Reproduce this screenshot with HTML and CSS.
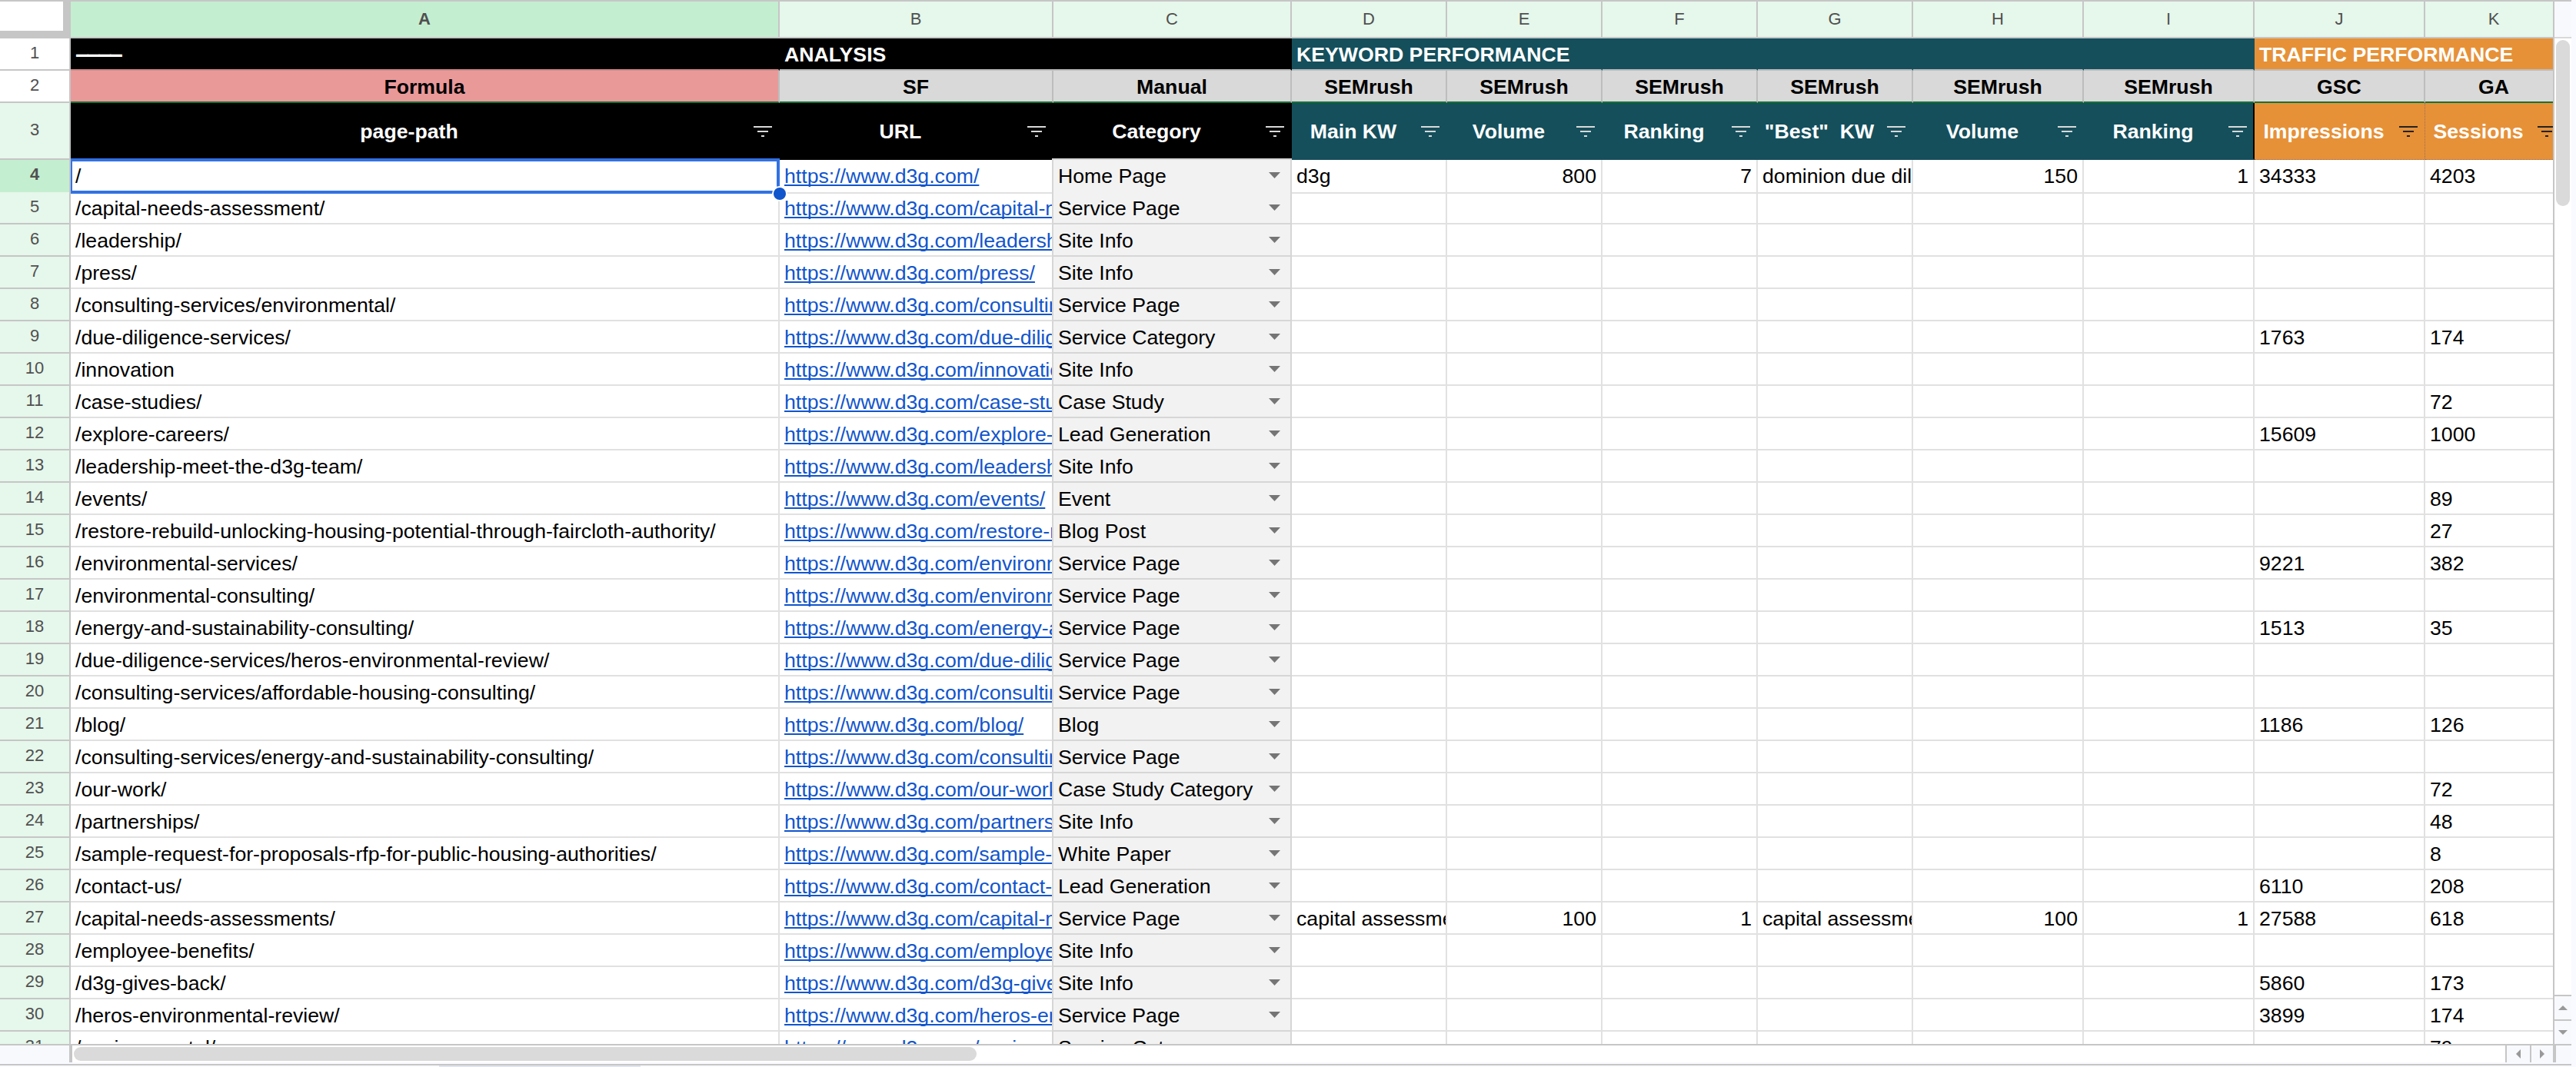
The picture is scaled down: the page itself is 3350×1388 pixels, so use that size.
FILE: index.html
```html
<!DOCTYPE html>
<html lang="en">
<head>
  <meta charset="UTF-8" />
  <meta name="viewport" content="width=device-width, initial-scale=1.0"/>
  <title>Content Audit</title>
  <link rel="stylesheet" href="styles.css">
</head>
<body>
  <div class="sheet">
    <div class="sheet-main">
      <div class="viewport">
        <div class="row letters">
          <div class="corner"></div>
          <div class="selected">A</div>
          <div>B</div>
          <div>C</div>
          <div>D</div>
          <div>E</div>
          <div>F</div>
          <div>G</div>
          <div>H</div>
          <div>I</div>
          <div>J</div>
          <div>K</div>
        </div>

        <div class="row groups">
          <div class="num plain">1</div>
          <div class="cell black dashes">––––</div>
          <div class="cell black wide">ANALYSIS</div>
          <div class="cell teal wide">KEYWORD PERFORMANCE</div>
          <div class="cell teal"></div>
          <div class="cell teal"></div>
          <div class="cell teal"></div>
          <div class="cell teal"></div>
          <div class="cell orange wide">TRAFFIC PERFORMANCE</div>
        </div>

        <div class="row sources">
          <div class="num plain">2</div>
          <div class="cell pink">Formula</div>
          <div class="cell">SF</div>
          <div class="cell">Manual</div>
          <div class="cell">SEMrush</div>
          <div class="cell">SEMrush</div>
          <div class="cell">SEMrush</div>
          <div class="cell">SEMrush</div>
          <div class="cell">SEMrush</div>
          <div class="cell">SEMrush</div>
          <div class="cell">GSC</div>
          <div class="cell">GA</div>
        </div>

        <div class="row titles" id="titles">
          <div class="num">3</div>
        </div>

        <div id="rows"></div>
      </div>

      <div class="vscroll">
        <div class="vscroll-top"></div>
        <div class="vtrack"><div class="vthumb"></div></div>
        <div class="arrow-btn"><svg width="12" height="6" viewBox="0 0 12 6"><path d="M0 6L6 0L12 6Z"/></svg></div>
        <div class="arrow-btn"><svg width="12" height="6" viewBox="0 0 12 6"><path d="M0 0L6 6L12 0Z"/></svg></div>
      </div>
    </div>

    <div class="hscroll">
      <div class="hscroll-left"></div>
      <div class="htrack"><div class="hthumb"></div></div>
      <div class="harrow"><svg width="6" height="12" viewBox="0 0 6 12"><path d="M6 0L0 6L6 12Z"/></svg></div>
      <div class="harrow"><svg width="6" height="12" viewBox="0 0 6 12"><path d="M0 0L6 6L0 12Z"/></svg></div>
      <div class="hscroll-end"></div>
    </div>
    <div class="tabs"><div class="tab"></div></div>
  </div>

  <script>
    const titles = [
      ['page-path', 'black'], ['URL', 'black'], ['Category', 'black'],
      ['Main KW', 'teal'], ['Volume', 'teal'], ['Ranking', 'teal'],
      ['"Best"  KW', 'teal'], ['Volume', 'teal'], ['Ranking', 'teal last'],
      ['Impressions', 'orange'], ['Sessions', 'orange']
    ];

    // path, category, columns D to K
    const pages = [
      ['/', 'Home Page', 'd3g', '800', '7', 'dominion due diligence', '150', '1', '34333', '4203'],
      ['/capital-needs-assessment/', 'Service Page'],
      ['/leadership/', 'Site Info'],
      ['/press/', 'Site Info'],
      ['/consulting-services/environmental/', 'Service Page'],
      ['/due-diligence-services/', 'Service Category', '', '', '', '', '', '', '1763', '174'],
      ['/innovation', 'Site Info'],
      ['/case-studies/', 'Case Study', '', '', '', '', '', '', '', '72'],
      ['/explore-careers/', 'Lead Generation', '', '', '', '', '', '', '15609', '1000'],
      ['/leadership-meet-the-d3g-team/', 'Site Info'],
      ['/events/', 'Event', '', '', '', '', '', '', '', '89'],
      ['/restore-rebuild-unlocking-housing-potential-through-faircloth-authority/', 'Blog Post', '', '', '', '', '', '', '', '27'],
      ['/environmental-services/', 'Service Page', '', '', '', '', '', '', '9221', '382'],
      ['/environmental-consulting/', 'Service Page'],
      ['/energy-and-sustainability-consulting/', 'Service Page', '', '', '', '', '', '', '1513', '35'],
      ['/due-diligence-services/heros-environmental-review/', 'Service Page'],
      ['/consulting-services/affordable-housing-consulting/', 'Service Page'],
      ['/blog/', 'Blog', '', '', '', '', '', '', '1186', '126'],
      ['/consulting-services/energy-and-sustainability-consulting/', 'Service Page'],
      ['/our-work/', 'Case Study Category', '', '', '', '', '', '', '', '72'],
      ['/partnerships/', 'Site Info', '', '', '', '', '', '', '', '48'],
      ['/sample-request-for-proposals-rfp-for-public-housing-authorities/', 'White Paper', '', '', '', '', '', '', '', '8'],
      ['/contact-us/', 'Lead Generation', '', '', '', '', '', '', '6110', '208'],
      ['/capital-needs-assessments/', 'Service Page', 'capital assessment', '100', '1', 'capital assessment', '100', '1', '27588', '618'],
      ['/employee-benefits/', 'Site Info'],
      ['/d3g-gives-back/', 'Site Info', '', '', '', '', '', '', '5860', '173'],
      ['/heros-environmental-review/', 'Service Page', '', '', '', '', '', '', '3899', '174'],
      ['/environmental/', 'Service Category', '', '', '', '', '', '', '', '79']
    ];

    const filterIcon = '<svg class="filter" width="24" height="14" viewBox="0 0 24 14"><path d="M0 0H24V2H0ZM5 6H19V8H5ZM10 12H14V14H10Z"/></svg>';
    const caret = '<svg class="caret" width="15" height="8" viewBox="0 0 15 8"><path d="M0 0H15L7.5 8Z"/></svg>';

    document.getElementById('titles').innerHTML += titles.map(([text, color]) =>
      `<div class="cell ${color}"><span class="label">${text}</span>${filterIcon}</div>`
    ).join('');

    document.getElementById('rows').innerHTML = pages.map((page, i) => {
      const [path, category, ...rest] = page;
      let cells = '';
      for (let c = 0; c < 8; c++) {
        // volume and ranking are numbers, the rest is imported as text
        const number = [1, 2, 4, 5].includes(c) ? ' number' : '';
        cells += `<div class="cell${number}">${rest[c] || ''}</div>`;
      }
      const active = i === 0;
      return `<div class="row data">
        <div class="num${active ? ' selected' : ''}">${i + 4}</div>
        <div class="cell${active ? ' active' : ''}">${path}${active ? '<i class="handle"></i>' : ''}</div>
        <div class="cell"><a>https://www.d3g.com${path}</a></div>
        <div class="cell category"><span>${category}</span>${caret}</div>
        ${cells}
      </div>`;
    }).join('');
  </script>
</body>
</html>
```
FILE: styles.css
```css
* {
  box-sizing: border-box;
}

body {
  margin: 0;
  font-family: "Liberation Sans", Arial, sans-serif;
  font-size: 26.67px;
  color: #000;
  background-color: #f9faff;
}

.sheet {
  width: 3344px;
  height: 1388px;
  overflow: hidden;
  display: flex;
  flex-direction: column;
}

.sheet-main {
  display: flex;
  height: 1360px;
  border-top: 2px solid #c6c6c6;
  border-bottom: 2px solid #c6c6c6;
}

.viewport {
  width: 3322px;
  overflow: hidden;
  background: #fff;
  border-right: 2px solid #c6c6c6;
}

/* every row uses the same columns: row number, then A to K */
.row {
  display: grid;
  grid-template-columns: 92px 922px 356px 310px 202px 202px 202px 202px 222px 222px 222px 180px;
  width: 3334px;
  height: 42px;
}

.letters {
  height: 48px;
  font-size: 22px;
  line-height: 46px;
  text-align: center;
  color: #505050;
}

.letters div {
  background: #e6f7eb;
  border-right: 2px solid #c6c6c6;
  border-bottom: 2px solid #c6c6c6;
}

.letters .corner {
  background: #fff;
  border-right: 10px solid #c6c6c6;
  border-bottom: 10px solid #c6c6c6;
}

.letters .selected,
.num.selected {
  background: #c4eed0;
  font-weight: bold;
}

.num {
  background: #e6f7eb;
  border-right: 2px solid #c6c6c6;
  border-bottom: 2px solid #c6c6c6;
  font-size: 22px;
  line-height: 37px;
  text-align: center;
  color: #505050;
}

.num.plain {
  background: #fff;
}

.cell {
  padding: 0 6px;
  line-height: 42px;
  white-space: nowrap;
  overflow: hidden;
  border-right: 2px solid #e1e1e1;
  border-bottom: 2px solid #e1e1e1;
}

.cell.black {
  background: #000;
  border-color: #000;
}

.cell.teal {
  background: #154f5c;
  border-color: #154f5c;
}

.cell.orange {
  background: #e69138;
  border-color: #e69138;
}

/* group names */
.groups .cell {
  color: #fff;
  font-weight: bold;
  border-bottom-color: #bdbdbd;
}

.groups .dashes {
  border-bottom-color: #d08a8a;
  font-size: 32px;
  letter-spacing: -3.1px;
  line-height: 40px;
}

.groups .wide {
  grid-column: span 2;
}

/* data sources */
.sources .cell {
  background: #d9d9d9;
  text-align: center;
  font-weight: bold;
  border-right-color: #bdbdbd;
  border-bottom-color: #137333;
}

.sources .pink {
  background: #ea9999;
}

/* column titles */
.titles {
  height: 74px;
}

.titles .num {
  line-height: 69px;
}

.titles .cell {
  display: flex;
  align-items: flex-start;
  padding: 0 8px 0 0;
  color: #fff;
  font-weight: bold;
  line-height: 74px;
}

.titles .orange {
  border-right: 1px dotted #a06a50;
  border-bottom: 1px dotted #a06a50;
  padding-right: 9px;
}

.titles .last {
  border-right-color: #000;
}

.label {
  flex: 1;
  text-align: center;
  white-space: pre;
  margin-right: 8px;
}

.filter {
  flex: none;
  margin-top: 30px;
  fill: #d9d9d9;
}

.orange .filter {
  fill: #222;
}

/* pages */
.data a {
  color: #1155cc;
  text-decoration: underline;
  text-decoration-thickness: 2px;
  text-underline-offset: 2px;
  text-decoration-skip-ink: none;
}

.number {
  text-align: right;
}

.data .category {
  display: flex;
  align-items: flex-start;
  justify-content: space-between;
  padding-right: 13px;
  background: #f2f2f2;
  border-color: #d6d6d6;
  box-shadow: -2px 0 0 #d6d6d6;
}

.data:first-child .category {
  box-shadow: -2px 0 0 #d6d6d6, 0 -2px 0 #d6d6d6, -2px -2px 0 #d6d6d6;
}

.caret {
  margin-top: 16px;
  fill: #757575;
}

.data .active {
  position: relative;
  overflow: visible;
  border-color: transparent;
}

.active::before {
  content: "";
  position: absolute;
  left: 0;
  right: -2px;
  top: -2px;
  bottom: -2px;
  border: 4px solid #3271e3;
  border-left-width: 2px;
}

.handle {
  position: absolute;
  right: -12px;
  bottom: -12px;
  z-index: 1;
  width: 20px;
  height: 20px;
  border: 2px solid #fff;
  border-radius: 50%;
  background: #1155cc;
}

/* scrollbars */
.vscroll {
  display: flex;
  flex-direction: column;
  width: 22px;
  background: #fff;
}

.vscroll-top {
  height: 48px;
  background: #f8f9fc;
  border-bottom: 2px solid #d9d9d9;
}

.vtrack {
  flex: 1;
  padding: 2px;
}

.vthumb {
  width: 18px;
  height: 216px;
  border-radius: 9px;
  background: #dadada;
}

.arrow-btn {
  display: flex;
  align-items: center;
  justify-content: center;
  height: 32px;
  background: #f8f9fc;
  border-top: 2px solid #c6c6c6;
}

.arrow-btn svg,
.harrow svg {
  fill: #999;
}

.hscroll {
  display: flex;
  height: 22px;
  background: #fff;
}

.hscroll-left {
  width: 94px;
  background: #f8f9fc;
  border-right: 4px solid #c6c6c6;
}

.htrack {
  flex: 1;
  padding: 2px;
}

.hthumb {
  width: 1174px;
  height: 18px;
  border-radius: 9px;
  background: #dadada;
}

.harrow {
  display: flex;
  align-items: center;
  justify-content: center;
  width: 32px;
  background: #f8f9fc;
  border-left: 2px solid #c6c6c6;
}

.harrow + .harrow {
  width: 30px;
}

.hscroll-end {
  width: 24px;
  background: #f8f9fc;
  border-left: 4px solid #c6c6c6;
}

.tabs {
  height: 4px;
  margin-top: 2px;
  border-top: 2px solid #c6c6c6;
}

.tab {
  width: 262px;
  height: 2px;
  margin-left: 571px;
  background: #e1e3ed;
}
```
